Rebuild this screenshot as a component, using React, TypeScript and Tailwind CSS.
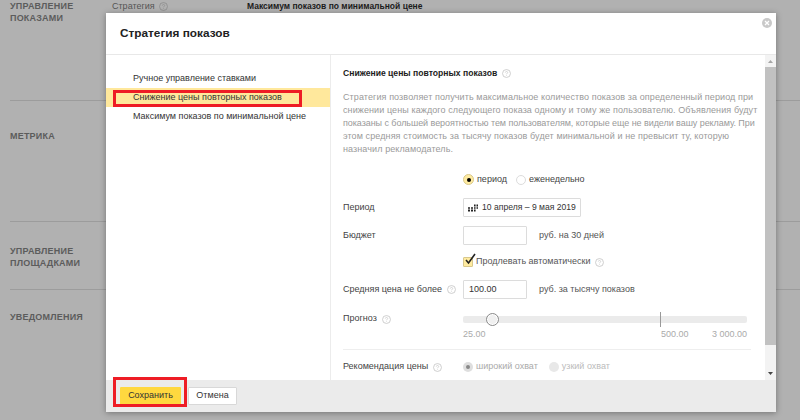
import React from "react";

const Help = ({ className = "text-[#c4c4c4]" }: { className?: string }) => (
  <svg width="9" height="9" viewBox="0 0 10 10" className={"shrink-0 " + className} fill="none">
    <circle cx="5" cy="5" r="4.400" stroke="currentColor" strokeWidth="0.9" />
    <path d="M3.700 4c0-.8.6-1.300 1.300-1.300s1.300.5 1.300 1.200c0 .9-1.300 1-1.300 2M5 7v.7" stroke="currentColor" strokeWidth="0.8" />
  </svg>
);

const Row = ({ label, help, children, className = "" }: { label: string; help?: boolean; children: React.ReactNode; className?: string }) => (
  <div className={"flex items-center " + className}>
    <div className="w-[120px] shrink-0 flex items-center gap-[5px] text-[#444] whitespace-nowrap">
      <span>{label}</span>
      {help && <Help />}
    </div>
    {children}
  </div>
);

const Section = ({ lines, h, border = true }: { lines: string[]; h: string; border?: boolean }) => (
  <div className={"ml-[10px] w-[790px] " + h + (border ? " border-b border-[#9c9c9c]" : "")}>
    <div className="text-[9px] font-bold leading-[12px] tracking-[0.2px] text-[#5c5c5c]">
      {lines.map((l) => (
        <div key={l}>{l}</div>
      ))}
    </div>
  </div>
);

export default function App() {
  return (
    <div
      className="relative w-[800px] h-[420px] overflow-hidden bg-[#b1b1b1] text-[9px]"
      style={{ fontFamily: '"Liberation Sans", sans-serif' }}
    >
      <div className="flex flex-col">
        <div className="relative">
          <Section lines={["УПРАВЛЕНИЕ", "ПОКАЗАМИ"]} h="h-[101px]" />
          <div className="absolute left-[112px] top-0 flex items-center gap-[4px] text-[#555]">
            <span className="leading-[12px]">Стратегия</span>
            <Help className="text-[#8c8c8c]" />
          </div>
          <div className="absolute left-[247px] top-0 leading-[12px] text-[8.500px] font-bold text-[#1c1c1c]">Максимум показов по минимальной цене</div>
        </div>
        <Section lines={["МЕТРИКА"]} h="h-[121px] pt-[29px]" />
        <Section lines={["УПРАВЛЕНИЕ", "ПЛОЩАДКАМИ"]} h="h-[68px] pt-[23px]" />
        <Section lines={["УВЕДОМЛЕНИЯ"]} h="h-[100px] pt-[21px]" border={false} />
      </div>

      <div className="absolute left-[106px] top-[13px] w-[670px] h-[399px] bg-white flex flex-col shadow-[0_1px_6px_rgba(0,0,0,0.35)]">
        <div className="relative h-[42px] shrink-0 border-b border-[#e8e8e8] flex items-center pl-[14px]">
          <span className="text-[11.800px] font-bold text-[#222]">Стратегия показов</span>
          <svg width="10" height="10" viewBox="0 0 10 10" className="absolute right-[4px] top-[5px]">
            <circle cx="5" cy="5" r="5" fill="#c9c9c9" />
            <path d="M3 3l4 4M7 3l-4 4" stroke="#fff" strokeWidth="1.300" />
          </svg>
        </div>
        <div className="flex flex-1 min-h-0">
          <div className="w-[225px] shrink-0 border-r border-[#ececec] pt-[14px] text-[#333] whitespace-nowrap">
            <div className="pl-[27px] h-[19px] leading-[19px]">Ручное управление ставками</div>
            <div className="pl-[27px] h-[19px] leading-[19px] bg-[#ffe89c]">Снижение цены повторных показов</div>
            <div className="pl-[27px] h-[19px] leading-[19px]">Максимум показов по минимальной цене</div>
          </div>
          <div className="flex-1 min-w-0 overflow-hidden pl-[12px] pr-[14px] pt-[12px]">
            <div className="flex items-center gap-[5px] font-bold text-[#1c1c1c] h-[12px]">
              <span className="text-[8.600px]">Снижение цены повторных показов</span>
              <Help />
            </div>
            <p className="mt-[12px] text-[#9a9a9a] text-[9px] tracking-[0.1px] leading-[13px] whitespace-nowrap">
              Стратегия позволяет получить максимальное количество показов за определенный период при<br />
              снижении цены каждого следующего показа одному и тому же пользователю. Объявления будут<br />
              <span className="tracking-[-0.06px]">показаны с большей вероятностью тем пользователям, которые еще не видели вашу рекламу. При</span><br />
              этом средняя стоимость за тысячу показов будет минимальной и не превысит ту, которую<br />
              назначил рекламодатель.
            </p>
            <div className="mt-[17px] ml-[120px] flex items-center h-[13px] text-[#444]">
              <span className="w-[11px] h-[11px] rounded-full border border-[#d8c88c] bg-[#ffeba0] flex items-center justify-center mr-[3px]">
                <span className="w-[4px] h-[4px] rounded-full bg-black" />
              </span>
              <span>период</span>
              <span className="w-[10px] h-[10px] rounded-full border border-[#dcdcdc] bg-white ml-[9px] mr-[3px]" />
              <span>еженедельно</span>
            </div>
            <Row label="Период" className="mt-[12px] h-[19px]">
              <div className="w-[118px] h-[19px] border border-[#dcdcdc] rounded-[1px] flex items-center pl-[4px] gap-[3px] text-[#333] whitespace-nowrap">
                <svg width="11" height="8" viewBox="0 0 11 7" fill="#222" className="shrink-0">
                  <path d="M3 2.700h2v1.600H3zM6 2.700h1.600v1.600H6zM8.500 2.700H10v1.600H8.500zM6 0h1.600v2H6zM8.500 0H10v2H8.500zM0 5h2v2H0zM3 5h2v2H3zM6 5h1.600v2H6zM0 2.700h2v1.600H0z" />
                </svg>
                <span className="text-[8.600px]">10 апреля – 9 мая 2019</span>
              </div>
            </Row>
            <Row label="Бюджет" className="mt-[9px] h-[19px]">
              <div className="w-[64px] h-[19px] border border-[#dcdcdc] rounded-[1px]" />
              <span className="ml-[12px] text-[#555]">руб. на 30 дней</span>
            </Row>
            <div className="mt-[10px] ml-[120px] h-[14px] flex items-center text-[#555]">
              <span className="relative w-[10px] h-[10px] bg-[#ffeba0] border border-[#d8c88c] mr-[3px] rounded-[1px]">
                <svg width="13" height="13" viewBox="0 0 13 13" className="absolute left-[0px] top-[-5px]" fill="none">
                  <path d="M2 7l2.500 3L11 1" stroke="#222" strokeWidth="1.600" />
                </svg>
              </span>
              <span className="mr-[4px]">Продлевать автоматически</span>
              <Help />
            </div>
            <Row label="Средняя цена не более" help className="mt-[11px] h-[19px]">
              <div className="w-[64px] h-[19px] border border-[#dcdcdc] rounded-[1px] flex items-center pl-[5px] text-[#333]">100.00</div>
              <span className="ml-[12px] text-[#555]">руб. за тысячу показов</span>
            </Row>
            <Row label="Прогноз" help className="mt-[14px] h-[12px]">
              <div className="relative w-[284px] h-[7px] bg-[#ebebeb] rounded-[2px]">
                <span className="absolute left-[23px] top-[-3px] w-[13px] h-[13px] rounded-full border border-[#8a8a8a] bg-[#f0f0f0] shadow-[inset_0_0_0_1px_#fff]" />
                <span className="absolute left-[197px] top-[-4px] w-px h-[15px] bg-[#999]" />
              </div>
            </Row>
            <div className="ml-[120px] mt-[2px] w-[284px] flex text-[#aaa] h-[14px] leading-[14px]">
              <span className="w-[198px]">25.00</span>
              <span>500.00</span>
              <span className="ml-auto">3 000.00</span>
            </div>
            <div className="mt-[8px] w-[408px] border-t border-[#eeeeee]" />
            <Row label="Рекомендация цены" help className="mt-[11px] h-[12px]">
              <span className="w-[10px] h-[10px] rounded-full bg-[#dedede] flex items-center justify-center mr-[3px]">
                <span className="w-[4px] h-[4px] rounded-full bg-[#888]" />
              </span>
              <span className="text-[#aaa]">широкий охват</span>
              <span className="w-[10px] h-[10px] rounded-full bg-[#e8e8e8] ml-[11px] mr-[3px]" />
              <span className="text-[#bbb]">узкий охват</span>
            </Row>
          </div>
          <div className="relative w-[11px] shrink-0 bg-[#f3f3f3] flex flex-col items-center justify-between">
            <div className="absolute left-0 right-0 top-[12px] bottom-[35px] bg-[#c1c1c1]" />
            <svg width="5" height="3" viewBox="0 0 5 3" className="mt-[5px]"><path d="M0 3l2.500-3L5 3z" fill="#a5a5a5" /></svg>
            <svg width="5" height="3" viewBox="0 0 5 3" className="mb-[5px]"><path d="M0 0l2.500 3L5 0z" fill="#444" /></svg>
          </div>
        </div>
        <div className="h-[32px] shrink-0 bg-[#ebebeb] flex items-center pl-[14px] gap-[7px]">
          <div className="w-[61px] h-[18px] bg-[#ffd83f] rounded-[1px] flex items-center justify-center text-[#333]">Сохранить</div>
          <div className="w-[49px] h-[18px] bg-white border border-[#d8d8d8] rounded-[1px] flex items-center justify-center text-[#333]">Отмена</div>
        </div>
      </div>

      <div className="absolute left-[113px] top-[90px] w-[189px] h-[17px] border-[3px] border-[#ee1c25]" />
      <div className="absolute left-[113px] top-[377px] w-[74px] h-[30px] border-[3px] border-[#ee1c25]" />
    </div>
  );
}
